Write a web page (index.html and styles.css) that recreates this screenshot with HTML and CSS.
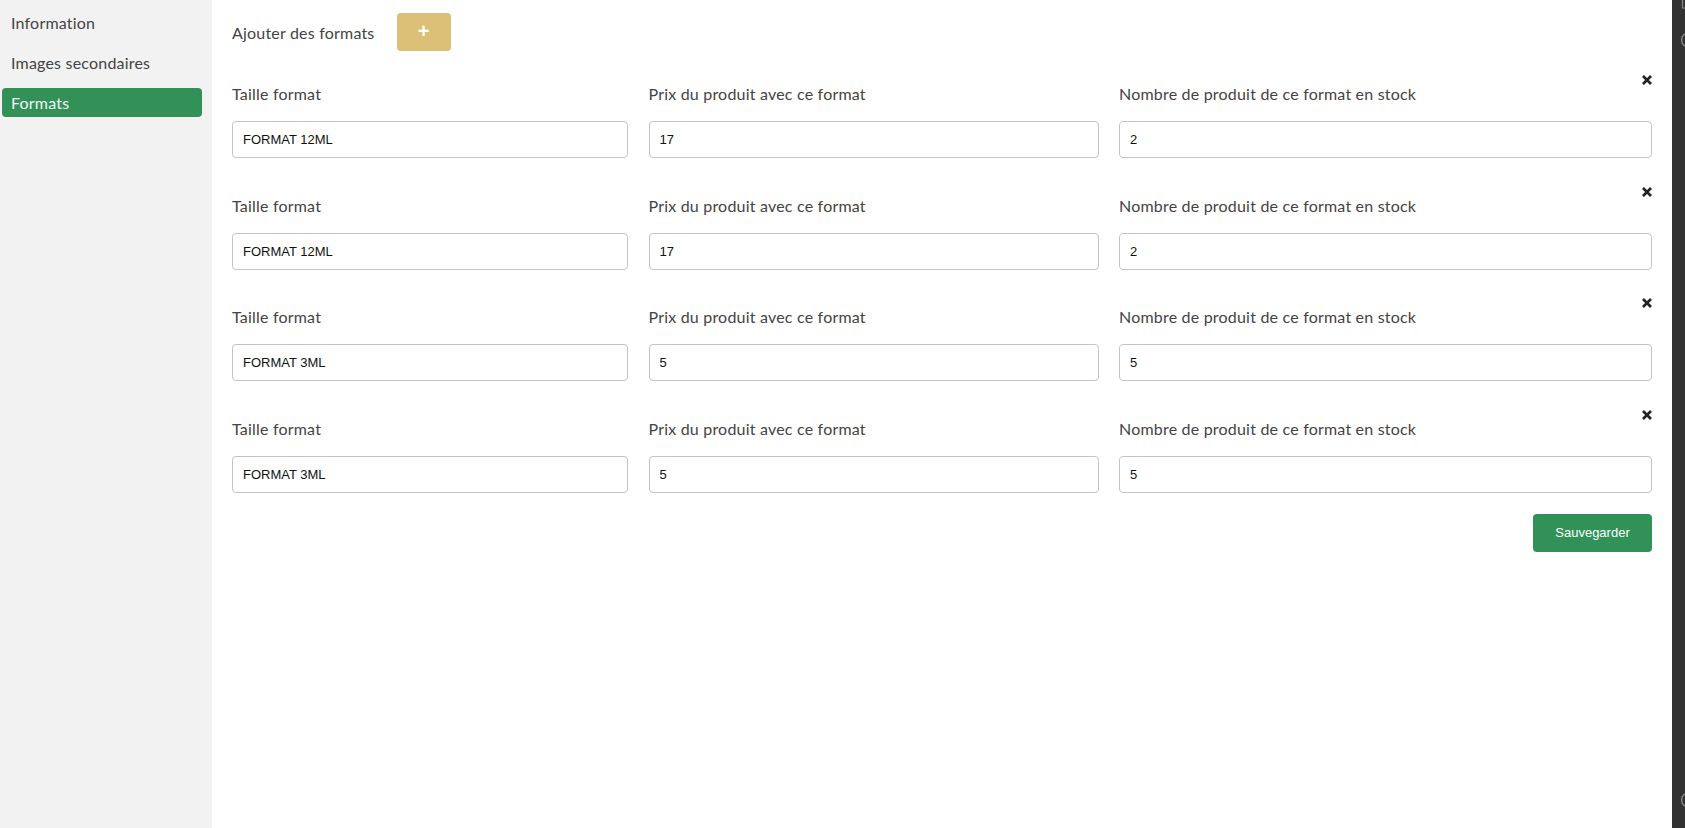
FILE: index.html
```html
<!DOCTYPE html>
<html lang="fr">
<head>
<meta charset="utf-8">
<title>Formats</title>
<link rel="stylesheet" href="styles.css">
</head>
<body>
<div class="app">
  <aside class="sidebar">
    <a class="nav-item">Information</a>
    <a class="nav-item">Images secondaires</a>
    <a class="nav-item active">Formats</a>
  </aside>
  <main class="main">
    <div class="add-bar">
      <span class="add-label">Ajouter des formats</span>
      <button class="btn-add" type="button">+</button>
    </div>
    <div class="formats">
      <div class="format-row">
        <button class="btn-remove" type="button"><svg viewBox="0 0 12 12" width="12" height="12"><path d="M2 2 L10 10 M10 2 L2 10" stroke="#222" stroke-width="2.6" stroke-linecap="butt"/></svg></button>
        <div class="field"><label class="field-label">Taille format</label><input class="field-input" value="FORMAT 12ML"></div>
        <div class="field"><label class="field-label">Prix du produit avec ce format</label><input class="field-input" value="17"></div>
        <div class="field"><label class="field-label">Nombre de produit de ce format en stock</label><input class="field-input" value="2"></div>
      </div>
      <div class="format-row">
        <button class="btn-remove" type="button"><svg viewBox="0 0 12 12" width="12" height="12"><path d="M2 2 L10 10 M10 2 L2 10" stroke="#222" stroke-width="2.6" stroke-linecap="butt"/></svg></button>
        <div class="field"><label class="field-label">Taille format</label><input class="field-input" value="FORMAT 12ML"></div>
        <div class="field"><label class="field-label">Prix du produit avec ce format</label><input class="field-input" value="17"></div>
        <div class="field"><label class="field-label">Nombre de produit de ce format en stock</label><input class="field-input" value="2"></div>
      </div>
      <div class="format-row">
        <button class="btn-remove" type="button"><svg viewBox="0 0 12 12" width="12" height="12"><path d="M2 2 L10 10 M10 2 L2 10" stroke="#222" stroke-width="2.6" stroke-linecap="butt"/></svg></button>
        <div class="field"><label class="field-label">Taille format</label><input class="field-input" value="FORMAT 3ML"></div>
        <div class="field"><label class="field-label">Prix du produit avec ce format</label><input class="field-input" value="5"></div>
        <div class="field"><label class="field-label">Nombre de produit de ce format en stock</label><input class="field-input" value="5"></div>
      </div>
      <div class="format-row">
        <button class="btn-remove" type="button"><svg viewBox="0 0 12 12" width="12" height="12"><path d="M2 2 L10 10 M10 2 L2 10" stroke="#222" stroke-width="2.6" stroke-linecap="butt"/></svg></button>
        <div class="field"><label class="field-label">Taille format</label><input class="field-input" value="FORMAT 3ML"></div>
        <div class="field"><label class="field-label">Prix du produit avec ce format</label><input class="field-input" value="5"></div>
        <div class="field"><label class="field-label">Nombre de produit de ce format en stock</label><input class="field-input" value="5"></div>
      </div>
    </div>
    <div class="actions">
      <button class="btn-save" type="button">Sauvegarder</button>
    </div>
  </main>
  <div class="edge">
    <svg class="edge-mark tick" viewBox="0 0 13 14" width="13" height="14"><path d="M10.5 0 V8 H13" fill="none" stroke="#8a8a8a" stroke-width="1.2"/></svg>
    <svg class="edge-mark top" viewBox="0 0 13 16" width="13" height="16"><path d="M14 1.5 A7 7 0 0 0 14 14.5" fill="none" stroke="#8a8a8a" stroke-width="1.3"/></svg>
    <svg class="edge-mark bottom" viewBox="0 0 13 16" width="13" height="16"><path d="M14 1.5 A7 7 0 0 0 14 14.5" fill="none" stroke="#8a8a8a" stroke-width="1.3"/></svg>
  </div>
</div>
</body>
</html>
```

FILE: styles.css
```css
* { box-sizing: border-box; }

html, body {
  margin: 0;
  padding: 0;
  height: 100%;
}

body {
  font-family: Lato, "Noto Sans", sans-serif;
  color: #444444;
  background: #ffffff;
}

.app {
  display: flex;
  height: 828px;
  overflow: hidden;
}

.sidebar {
  width: 212px;
  flex: 0 0 212px;
  background: #f2f2f2;
  padding: 8px 10px 0 2px;
  display: flex;
  flex-direction: column;
  gap: 11px;
}

.nav-item {
  display: block;
  height: 29px;
  line-height: 29px;
  padding-left: 9px;
  font-size: 16px;
  letter-spacing: 0.2px;
  color: #444444;
  border-radius: 4px;
  cursor: pointer;
}

.nav-item.active {
  background: #329157;
  color: #f4f4f4;
}

.main {
  flex: 1 1 auto;
  padding: 13px 20px 0 20px;
  display: flex;
  flex-direction: column;
}

.add-bar {
  display: flex;
  align-items: center;
  gap: 22px;
  height: 38px;
}

.add-label {
  font-size: 16px;
  letter-spacing: 0.2px;
  color: #444444;
}

.btn-add {
  width: 54px;
  height: 38px;
  border: none;
  border-radius: 4px;
  background: #dcc077;
  color: #ffffff;
  font-family: "Liberation Sans", Arial, sans-serif;
  font-size: 20px;
  font-weight: 700;
  line-height: 1;
  padding: 0 0 2px 0;
}

.formats {
  margin-top: 31px;
  display: flex;
  flex-direction: column;
  gap: 35.5px;
}

.format-row {
  position: relative;
  display: grid;
  grid-template-columns: 396px 450px 1fr;
  column-gap: 20.5px;
}

.btn-remove {
  position: absolute;
  top: -8px;
  right: -1px;
  width: 12px;
  height: 12px;
  padding: 0;
  border: none;
  background: transparent;
  display: flex;
}

.field {
  display: flex;
  flex-direction: column;
}

.field-label {
  font-size: 16px;
  line-height: 24px;
  height: 24px;
  letter-spacing: 0.2px;
  color: #444444;
  margin-bottom: 15px;
  white-space: nowrap;
}

.field-input {
  height: 37px;
  width: 100%;
  border: 1px solid #c4c4c4;
  border-radius: 4px;
  padding: 0 10px;
  font-family: "Liberation Sans", Arial, sans-serif;
  font-size: 13px;
  color: #111;
  background: #fff;
  outline: none;
}

.actions {
  display: flex;
  justify-content: flex-end;
  margin-top: 21px;
}

.btn-save {
  width: 119px;
  height: 38px;
  border: none;
  border-radius: 4px;
  background: #329157;
  color: #ffffff;
  font-family: "Liberation Sans", Arial, sans-serif;
  font-size: 13px;
  padding: 0;
}

.edge {
  flex: 0 0 13px;
  width: 13px;
  background: #323232;
  position: relative;
  overflow: hidden;
}

.edge-mark {
  position: absolute;
  left: 0;
  display: block;
}

.edge-mark.tick { top: 0; }
.edge-mark.top { top: 32px; }
.edge-mark.bottom { top: 792px; }
```
